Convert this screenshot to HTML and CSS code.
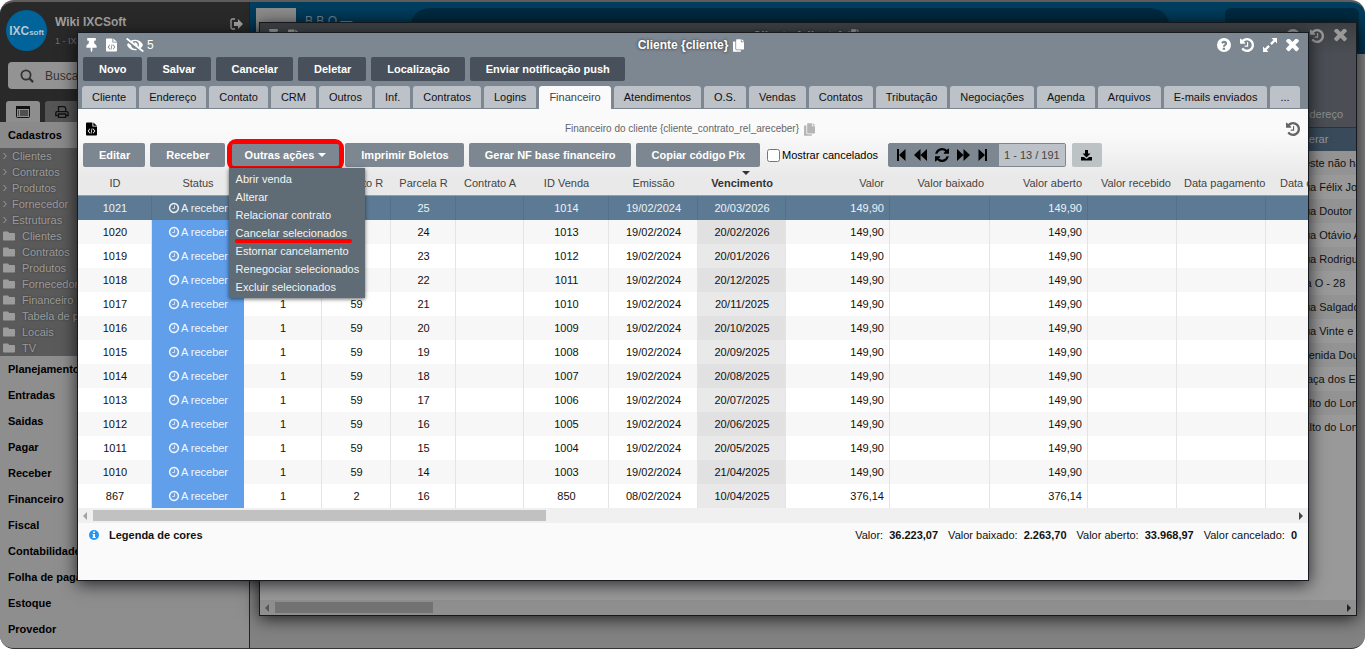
FILE: index.html
```html
<!DOCTYPE html>
<html lang="pt-BR">
<head>
<meta charset="utf-8">
<title>Cliente - Financeiro</title>
<link rel="stylesheet" href="styles.css">
</head>
<body>
<svg class="sprite" aria-hidden="true">
  <symbol id="clock" viewBox="0 0 1792 1792"><path d="M1024 544v448q0 14-9 23t-23 9h-320q-14 0-23-9t-9-23v-64q0-14 9-23t23-9h224v-352q0-14 9-23t23-9h64q14 0 23 9t9 23zm416 352q0-148-73-273t-198-198-273-73-273 73-198 198-73 273 73 273 198 198 273 73 273-73 198-198 73-273zm224 0q0 209-103 385.5t-279.5 279.5-385.5 103-385.5-103-279.5-279.5-103-385.5 103-385.5 279.5-279.5 385.5-103 385.5 103 279.5 279.5 103 385.5z"/></symbol>
  <symbol id="history" viewBox="128 128 1536 1536"><path d="M1664 896q0 156-61 298t-164 245-245 164-298 61q-172 0-327-72.5t-264-204.5q-7-10-6.5-22.5t8.5-20.5l137-138q10-9 25-9 16 2 23 12 73 95 179 147t225 52q104 0 198.5-40.5t163.5-109.5 109.5-163.5 40.5-198.5-40.5-198.5-109.5-163.5-163.5-109.5-198.5-40.5q-98 0-188 35.5t-160 101.5l137 138q31 30 14 69-17 40-59 40h-448q-26 0-45-19t-19-45v-448q0-42 40-59 39-17 69 14l130 129q107-101 244.5-156.5t284.5-55.5q156 0 298 61t245 164 164 245 61 298zm-640-288v448q0 14-9 23t-23 9h-320q-14 0-23-9t-9-23v-64q0-14 9-23t23-9h224v-352q0-14 9-23t23-9h64q14 0 23 9t9 23z"/></symbol>
  <symbol id="times" viewBox="290 420 1210 1210"><path d="M1490 1322q0 40-28 68l-136 136q-28 28-68 28t-68-28l-294-294-294 294q-28 28-68 28t-68-28l-136-136q-28-28-28-68t28-68l294-294-294-294q-28-28-28-68t28-68l136-136q28-28 68-28t68 28l294 294 294-294q28-28 68-28t68 28l136 136q28 28 28 68t-28 68l-294 294 294 294q28 28 28 68z"/></symbol>
  <symbol id="refresh" viewBox="128 128 1536 1536"><path d="M1639 1056q0 5-1 7-64 268-268 434.5t-478 166.5q-146 0-282.5-55t-243.5-157l-129 129q-19 19-45 19t-45-19-19-45v-448q0-26 19-45t45-19h448q26 0 45 19t19 45-19 45l-137 137q71 66 161 102t187 36q134 0 250-65t186-179q11-17 53-117 8-23 30-23h192q13 0 22.5 9.5t9.5 22.5zm25-800v448q0 26-19 45t-45 19h-448q-26 0-45-19t-19-45 19-45l138-138q-148-137-349-137-134 0-250 65t-186 179q-11 17-53 117-8 23-30 23h-199q-13 0-22.5-9.5t-9.5-22.5v-7q65-268 270-434.5t480-166.5q146 0 284 55.5t245 156.5l130-129q19-19 45-19t45 19 19 45z"/></symbol>
  <symbol id="pin" viewBox="0 0 384 512"><path d="M298 214L286 96H328c13 0 24-11 24-24V24c0-13-11-24-24-24H56C43 0 32 11 32 24v48c0 13 11 24 24 24h42L86 214C37 237 0 277 0 328c0 13 11 24 24 24h136v104l25 52c3 6 11 6 14 0l25-52V352h136c13 0 24-11 24-24 0-51-38-91-86-114z"/></symbol>
  <symbol id="eye" viewBox="0 0 640 512"><path d="M320 400c-75.85 0-137.25-58.71-142.9-133.11L72.2 185.82c-13.79 17.3-26.48 35.59-36.72 55.59a32.35 32.35 0 0 0 0 29.19C89.71 376.41 197.07 448 320 448c26.91 0 52.87-4 77.89-10.46L346 397.39a144.13 144.13 0 0 1-26 2.61zm313.82 58.1l-110.55-85.44a331.25 331.25 0 0 0 81.25-102.07 32.35 32.35 0 0 0 0-29.19C550.29 135.59 442.93 64 320 64a308.15 308.15 0 0 0-147.32 37.7L45.46 3.37A16 16 0 0 0 23 6.18L3.37 31.45A16 16 0 0 0 6.18 53.9l588.36 454.73a16 16 0 0 0 22.46-2.81l19.64-25.27a16 16 0 0 0-2.82-22.45zm-183.72-142l-39.3-30.38A94.75 94.75 0 0 0 416 256a94.76 94.76 0 0 0-121.31-92.21A47.65 47.65 0 0 1 304 192a46.64 46.64 0 0 1-1.54 10l-73.61-56.89A142.31 142.31 0 0 1 320 112a143.92 143.92 0 0 1 144 144c0 21.63-5.29 41.79-13.9 60.11z"/></symbol>
  <symbol id="copy" viewBox="0 0 448 512"><path d="M320 448v40c0 13-11 24-24 24H24c-13 0-24-11-24-24V120c0-13 11-24 24-24h72v296c0 31 25 56 56 56h168zm0-344V0H152c-13 0-24 11-24 24v368c0 13 11 24 24 24h272c13 0 24-11 24-24V128H344c-13 0-24-11-24-24zm121-31L375 7A24 24 0 0 0 358 0H352v96h96v-6a24 24 0 0 0-7-17z"/></symbol>
  <symbol id="code" viewBox="0 0 12 14"><path fill-rule="evenodd" d="M1 0h6v4.200h5V13a1 1 0 0 1-1 1H1a1 1 0 0 1-1-1V1a1 1 0 0 1 1-1zM4 6.500 1.800 9.200 4 11.900l.6-.6L3 9.200l1.600-2.100zM8 6.500l-.6.600L9 9.200l-1.600 2.100.6.600 2.200-2.700zM6.300 6.300 5 12l.8.200 1.300-5.700z"/><path d="M8 0v3.400h4z"/></symbol>
  <symbol id="folder" viewBox="0 64 512 384"><path d="M464 128H272l-64-64H48C21.490 64 0 85.490 0 112v288c0 26.510 21.490 48 48 48h416c26.510 0 48-21.490 48-48V176c0-26.510-21.490-48-48-48z"/></symbol>
  <symbol id="help" viewBox="0 0 14 14"><path fill-rule="evenodd" d="M7 0a7 7 0 1 1 0 14A7 7 0 0 1 7 0zM4.200 4.800l1.400 1c.5-.8 2.300-1.200 2.300 0 0 .9-2 1-2 2.900h2c0-1.100 2.200-1.300 2.200-3.200C10.100 2.300 5.800 1.900 4.200 4.800zM5.700 9.700v2.100h2.400V9.700z"/></symbol>
  <symbol id="expand" viewBox="0 0 14 14"><path d="M8.500 0H14v5.500l-1.900-1.900-3.300 3.300-1.700-1.700 3.300-3.300zM5.500 14H0V8.500l1.900 1.900 3.300-3.300 1.700 1.700-3.300 3.300z"/></symbol>
  <symbol id="chev" viewBox="0 0 4 8"><path d="M.5 1 3.300 4 .5 7" fill="none" stroke="currentColor"/></symbol>
</svg>
<div class="desktop">
  <aside class="sidebar">
    <header class="brand">
      <div class="logo"><b>IXC</b><span>soft</span></div>
      <div class="who"><strong>Wiki IXCSoft</strong><small>1 - IXCSoft</small></div>
      <svg class="exit" viewBox="0 0 13 12"><path d="M5 1H2.500Q1 1 1 2.500v7Q1 11 2.500 11H5" fill="none" stroke="currentColor" stroke-width="1.300"/><path d="M4 4h4V1l5 5-5 5V8H4z"/></svg>
    </header>
    <label class="search">
      <svg viewBox="0 0 14 14"><circle cx="6" cy="6" r="4.600" fill="none" stroke="currentColor" stroke-width="1.800"/><path d="m9.500 9.500 3.600 3.600" stroke="currentColor" stroke-width="2.200"/></svg>
      <input type="text" placeholder="Buscar" aria-label="Buscar">
    </label>
    <div class="side-tabs">
      <button class="side-tab on" aria-label="Menu"><svg width="14" height="12" viewBox="0 0 14 12"><rect x=".5" y=".5" width="13" height="11" rx="1" fill="none" stroke="currentColor"/><path d="M0 0h14v3H0zM2 4.500h1v1H2zm0 2h1v1H2zm0 2h1v1H2zM4 4.500h8v1H4zm0 2h8v1H4zm0 2h8v1H4z"/></svg></button>
      <button class="side-tab" aria-label="Imprimir"><svg width="14" height="12" viewBox="0 0 14 12"><path d="M3.500 6V.7h6l1.200 1.200V6M3 9.500H.8V7q0-1.300 1.300-1.300h9.800q1.300 0 1.300 1.300v2.500H11M3.500 8h7.200v3.400H3.500z" fill="none" stroke="currentColor" stroke-width="1.300"/></svg></button>
    </div>
    <h2 class="section">Cadastros</h2>
    <nav class="tree">
      <a href="#"><svg class="chev"><use href="#chev"/></svg>Clientes</a>
      <a href="#"><svg class="chev"><use href="#chev"/></svg>Contratos</a>
      <a href="#"><svg class="chev"><use href="#chev"/></svg>Produtos</a>
      <a href="#"><svg class="chev"><use href="#chev"/></svg>Fornecedor</a>
      <a href="#"><svg class="chev"><use href="#chev"/></svg>Estruturas</a>
      <a href="#"><svg class="fold"><use href="#folder"/></svg>Clientes</a>
      <a href="#"><svg class="fold"><use href="#folder"/></svg>Contratos</a>
      <a href="#"><svg class="fold"><use href="#folder"/></svg>Produtos</a>
      <a href="#"><svg class="fold"><use href="#folder"/></svg>Fornecedor</a>
      <a href="#"><svg class="fold"><use href="#folder"/></svg>Financeiro</a>
      <a href="#"><svg class="fold"><use href="#folder"/></svg>Tabela de preços</a>
      <a href="#"><svg class="fold"><use href="#folder"/></svg>Locais</a>
      <a href="#"><svg class="fold"><use href="#folder"/></svg>TV</a>
    </nav>
    <nav class="sections">
      <a href="#">Planejamento</a><a href="#">Entradas</a><a href="#">Saidas</a><a href="#">Pagar</a><a href="#">Receber</a><a href="#">Financeiro</a><a href="#">Fiscal</a><a href="#">Contabilidade</a><a href="#">Folha de pagamento</a><a href="#">Estoque</a><a href="#">Provedor</a>
    </nav>
  </aside>
  <main class="workspace">
    <header class="topbar"><div class="thumb"></div><span class="company">B B O —</span><div class="pill"></div><div class="panel"></div></header>
  </main>

  <section class="window back">
    <header class="titlebar">
      <div class="tools"><svg class="i-pin"><use href="#pin"/></svg><svg class="i-code"><use href="#code"/></svg></div>
      <h1>Cliente {cliente} <svg class="i-copy"><use href="#copy"/></svg></h1>
      <div class="tools end"><svg class="i14"><use href="#help"/></svg><svg class="i14"><use href="#history"/></svg><svg class="i-x"><use href="#times"/></svg></div>
    </header>
    <table class="addresses">
      <thead><tr><th>Endereço</th></tr></thead>
      <tbody>
        <tr class="sel"><td>Alterar</td></tr>
        <tr><td>Neste não há</td></tr>
        <tr><td>Rua Félix José</td></tr>
        <tr><td>Rua Doutor</td></tr>
        <tr><td>Rua Otávio A</td></tr>
        <tr><td>Rua Rodrigues</td></tr>
        <tr><td>Via O - 28</td></tr>
        <tr><td>Rua Salgado</td></tr>
        <tr><td>Rua Vinte e</td></tr>
        <tr><td>Avenida Doutor</td></tr>
        <tr><td>Praça dos Es</td></tr>
        <tr><td>Salto do Lontra</td></tr>
        <tr><td>Salto do Lontra</td></tr>
      </tbody>
    </table>
    <div class="scroll"><i class="arrow left"></i><i class="bar"></i><i class="arrow right"></i></div>
  </section>

  <section class="window front">
    <header class="titlebar">
      <div class="tools"><svg class="i-pin"><use href="#pin"/></svg><svg class="i-code"><use href="#code"/></svg><svg class="i-eye"><use href="#eye"/></svg><span>5</span></div>
      <h1>Cliente {cliente} <svg class="i-copy"><use href="#copy"/></svg></h1>
      <div class="tools end"><svg class="i14"><use href="#help"/></svg><svg class="i14"><use href="#history"/></svg><svg class="i14"><use href="#expand"/></svg><svg class="i-x"><use href="#times"/></svg></div>
    </header>
    <div class="actions">
      <button>Novo</button><button>Salvar</button><button>Cancelar</button><button>Deletar</button><button>Localização</button><button>Enviar notificação push</button>
    </div>
    <nav class="tabs">
      <button>Cliente</button><button>Endereço</button><button>Contato</button><button>CRM</button><button>Outros</button><button>Inf.</button><button>Contratos</button><button>Logins</button><button class="on">Financeiro</button><button>Atendimentos</button><button>O.S.</button><button>Vendas</button><button>Contatos</button><button>Tributação</button><button>Negociações</button><button>Agenda</button><button>Arquivos</button><button>E-mails enviados</button><button>...</button>
    </nav>
    <div class="content">
      <div class="grid-title">
        <svg class="i-code"><use href="#code"/></svg>
        <h2>Financeiro do cliente {cliente_contrato_rel_areceber} <svg class="i-copy"><use href="#copy"/></svg></h2>
        <svg class="i14"><use href="#history"/></svg>
      </div>
      <div class="toolbar">
        <button>Editar</button>
        <button>Receber</button>
        <div class="dropdown">
          <button class="toggle">Outras ações <i class="caret"></i></button>
          <div class="menu">
            <a href="#">Abrir venda</a><a href="#">Alterar</a><a href="#">Relacionar contrato</a><a href="#" class="marked">Cancelar selecionados</a><a href="#">Estornar cancelamento</a><a href="#">Renegociar selecionados</a><a href="#">Excluir selecionados</a>
          </div>
        </div>
        <button>Imprimir Boletos</button>
        <button>Gerar NF base financeiro</button>
        <button>Copiar código Pix</button>
        <label class="check"><input type="checkbox">Mostrar cancelados</label>
        <div class="pager">
          <button aria-label="Primeira"><svg width="10" height="12" viewBox="0 0 10 12"><path d="M1 0h2v12H1zM9.500 0v12L3 6z"/></svg></button>
          <button aria-label="Anterior"><svg width="13" height="12" viewBox="0 0 13 12"><path d="M6.500 0v12L0 6zM13 0v12L6.500 6z"/></svg></button>
          <button aria-label="Atualizar"><svg width="14" height="14"><use href="#refresh"/></svg></button>
          <button aria-label="Próxima"><svg width="13" height="12" viewBox="0 0 13 12"><path d="M6.500 0v12L13 6zM0 0v12l6.500-6z"/></svg></button>
          <button aria-label="Última"><svg width="10" height="12" viewBox="0 0 10 12"><path d="M7 0h2v12H7zM.5 0v12L7 6z"/></svg></button>
          <span>1 - 13 / 191</span>
        </div>
        <button class="download" aria-label="Baixar"><svg width="11" height="11" viewBox="0 0 11 11"><path d="M4 0h3v3.500h2.500l-4 4-4-4H4zM0 7h3l2.500 2L8 7h3v3.500H0z"/></svg></button>
      </div>
      <div class="table-wrap">
      <table class="grid">
        <colgroup><col class="w74"><col class="w92"><col class="w78"><col class="w69"><col class="w65"><col class="w68"><col class="w85"><col class="w89"><col class="w88"><col class="w104"><col class="w100"><col class="w98"><col class="w89"><col class="w89"><col class="w104"></colgroup>
        <thead><tr><th>ID</th><th>Status</th><th></th><th>Contrato R</th><th>Parcela R</th><th>Contrato A</th><th>ID Venda</th><th>Emissão</th><th class="sorted">Vencimento</th><th class="num">Valor</th><th class="num">Valor baixado</th><th class="num">Valor aberto</th><th class="num">Valor recebido</th><th class="date">Data pagamento</th><th class="start">Data crédito</th></tr></thead>
        <tbody>
        <tr class="sel"><td>1021</td><td class="st"><svg><use href="#clock"/></svg>A receber</td><td></td><td></td><td>25</td><td></td><td>1014</td><td>19/02/2024</td><td>20/03/2026</td><td class="num">149,90</td><td></td><td class="num">149,90</td><td></td><td></td><td></td></tr>
        <tr><td>1020</td><td class="st"><svg><use href="#clock"/></svg>A receber</td><td></td><td></td><td>24</td><td></td><td>1013</td><td>19/02/2024</td><td>20/02/2026</td><td class="num">149,90</td><td></td><td class="num">149,90</td><td></td><td></td><td></td></tr>
        <tr><td>1019</td><td class="st"><svg><use href="#clock"/></svg>A receber</td><td></td><td></td><td>23</td><td></td><td>1012</td><td>19/02/2024</td><td>20/01/2026</td><td class="num">149,90</td><td></td><td class="num">149,90</td><td></td><td></td><td></td></tr>
        <tr><td>1018</td><td class="st"><svg><use href="#clock"/></svg>A receber</td><td></td><td></td><td>22</td><td></td><td>1011</td><td>19/02/2024</td><td>20/12/2025</td><td class="num">149,90</td><td></td><td class="num">149,90</td><td></td><td></td><td></td></tr>
        <tr><td>1017</td><td class="st"><svg><use href="#clock"/></svg>A receber</td><td>1</td><td>59</td><td>21</td><td></td><td>1010</td><td>19/02/2024</td><td>20/11/2025</td><td class="num">149,90</td><td></td><td class="num">149,90</td><td></td><td></td><td></td></tr>
        <tr><td>1016</td><td class="st"><svg><use href="#clock"/></svg>A receber</td><td>1</td><td>59</td><td>20</td><td></td><td>1009</td><td>19/02/2024</td><td>20/10/2025</td><td class="num">149,90</td><td></td><td class="num">149,90</td><td></td><td></td><td></td></tr>
        <tr><td>1015</td><td class="st"><svg><use href="#clock"/></svg>A receber</td><td>1</td><td>59</td><td>19</td><td></td><td>1008</td><td>19/02/2024</td><td>20/09/2025</td><td class="num">149,90</td><td></td><td class="num">149,90</td><td></td><td></td><td></td></tr>
        <tr><td>1014</td><td class="st"><svg><use href="#clock"/></svg>A receber</td><td>1</td><td>59</td><td>18</td><td></td><td>1007</td><td>19/02/2024</td><td>20/08/2025</td><td class="num">149,90</td><td></td><td class="num">149,90</td><td></td><td></td><td></td></tr>
        <tr><td>1013</td><td class="st"><svg><use href="#clock"/></svg>A receber</td><td>1</td><td>59</td><td>17</td><td></td><td>1006</td><td>19/02/2024</td><td>20/07/2025</td><td class="num">149,90</td><td></td><td class="num">149,90</td><td></td><td></td><td></td></tr>
        <tr><td>1012</td><td class="st"><svg><use href="#clock"/></svg>A receber</td><td>1</td><td>59</td><td>16</td><td></td><td>1005</td><td>19/02/2024</td><td>20/06/2025</td><td class="num">149,90</td><td></td><td class="num">149,90</td><td></td><td></td><td></td></tr>
        <tr><td>1011</td><td class="st"><svg><use href="#clock"/></svg>A receber</td><td>1</td><td>59</td><td>15</td><td></td><td>1004</td><td>19/02/2024</td><td>20/05/2025</td><td class="num">149,90</td><td></td><td class="num">149,90</td><td></td><td></td><td></td></tr>
        <tr><td>1010</td><td class="st"><svg><use href="#clock"/></svg>A receber</td><td>1</td><td>59</td><td>14</td><td></td><td>1003</td><td>19/02/2024</td><td>21/04/2025</td><td class="num">149,90</td><td></td><td class="num">149,90</td><td></td><td></td><td></td></tr>
        <tr><td>867</td><td class="st"><svg><use href="#clock"/></svg>A receber</td><td>1</td><td>2</td><td>16</td><td></td><td>850</td><td>08/02/2024</td><td>10/04/2025</td><td class="num">376,14</td><td></td><td class="num">376,14</td><td></td><td></td><td></td></tr>
        </tbody>
      </table>
      </div>
      <div class="scroll"><i class="arrow left"></i><i class="bar"></i><i class="arrow right"></i></div>
      <footer class="totals">
        <svg width="10" height="10" viewBox="0 0 10 10"><circle cx="5" cy="5" r="5" fill="#2196f3"/><path d="M4 1.500h2V3H4zM3.500 4H6v3h.7v1H3.400V7H4V5h-.5z" fill="#fff"/></svg>
        <b class="legend">Legenda de cores</b>
        <span>Valor: <b>36.223,07</b></span><span>Valor baixado: <b>2.263,70</b></span><span>Valor aberto: <b>33.968,97</b></span><span>Valor cancelado: <b>0</b></span>
      </footer>
    </div>
  </section>
</div>
</body>
</html>
```
FILE: styles.css
```css
* { box-sizing: border-box; }
html { background: #fff; }
body { margin: 0; font: 11px/16px "Liberation Sans", Arial, sans-serif; color: #111; }
button, input { font: inherit; margin: 0; }
button { border: 0; padding: 0; cursor: pointer; }
a { color: inherit; text-decoration: none; }
h1, h2 { margin: 0; font-size: inherit; }
svg { fill: currentColor; flex: none; display: block; }
.sprite { position: absolute; width: 0; height: 0; }

.desktop { position: relative; display: flex; height: 100vh; overflow: hidden; border-radius: 14px; border-top: 2px solid #605c5c; border-bottom: 1px solid #333; background: #828282; }

/* Sidebar */
.sidebar { width: 250px; flex: none; display: flex; flex-direction: column; background: #8e8e8e; border-right: 1px solid #0f2a3a; }
.brand { display: flex; align-items: center; gap: 8px; height: 60px; padding: 0 6px; background: #292929; color: #a0a0a0; }
.logo { width: 41px; height: 41px; margin-bottom: 4px; border-radius: 50%; background: #00639a; color: #b9c6ce; display: flex; align-items: baseline; justify-content: center; line-height: 42px; }
.logo b { font-size: 12px; }
.logo span { font-size: 8px; font-weight: bold; }
.who { flex: 1; padding-bottom: 1px; }
.who strong { display: block; font-size: 12px; line-height: 18px; }
.who small { display: block; font-size: 9px; line-height: 20px; color: #707070; }
.exit { width: 13px; height: 12px; margin-bottom: 16px; }
.search { display: flex; align-items: center; background: #292929; padding: 0 8px 12px; }
.search svg { width: 14px; height: 14px; margin: 0 -26px 0 12px; color: #333; z-index: 1; }
.search input { flex: 1; min-width: 0; height: 27px; border: 0; border-radius: 4px; padding: 0 0 0 37px; background: #939393; font-size: 12px; }
.search input::placeholder { color: #333; opacity: 1; }
.side-tabs { display: flex; gap: 5px; height: 21px; padding: 0 6px; background: #292929; }
.side-tab { width: 34px; height: 22px; display: grid; place-items: center; border-radius: 3px 3px 0 0; background: #555; color: #111; }
.side-tab.on { background: #8e8e8e; }
.section { height: 26px; padding-left: 8px; line-height: 26px; color: #000; background: #8a8a8a; }
.tree { display: flex; flex-direction: column; background: #5a5a5a; color: #9c9c9c; }
.tree a { display: flex; align-items: center; height: 16px; text-shadow: 0 0 2px #333; white-space: nowrap; }
.chev { width: 4px; height: 8px; margin: 0 5px 0 3px; }
.fold { width: 12px; height: 10px; margin: 0 7px 0 3px; }
.sections { display: flex; flex-direction: column; }
.sections a { padding-left: 8px; line-height: 26px; font-weight: bold; color: #000; }

/* Workspace header */
.workspace { flex: 1; }
.topbar { display: flex; align-items: flex-start; height: 52px; padding: 6px 6px 0; background: linear-gradient(#003f60, #00304a); overflow: hidden; }
.thumb { width: 40px; height: 40px; background: #8c8c8c; }
.company { width: 114px; padding: 5px 0 0 9px; font-size: 12px; color: #6d8492; }
.pill { flex: 1; height: 46px; border-radius: 20px; background: #002a40; margin-right: 55px; }
.panel { width: 134px; height: 46px; border-radius: 6px; background: #002a40; }

/* Windows */
.window { position: absolute; display: flex; flex-direction: column; overflow: hidden; border: 1px solid #161a1e; box-shadow: 0 3px 16px rgba(0, 0, 0, .75); }
.window.back { left: 259px; right: 8px; top: 20px; bottom: 32px; background: #999; }
.window.front { left: 77px; right: 56px; top: 30px; bottom: 67px; background: #7d8791; }
.titlebar { display: grid; grid-template-columns: 1fr auto 1fr; align-items: center; flex: none; height: 24px; padding: 0 9px 0 8px; color: #fff; }
.back .titlebar { height: 79px; padding-bottom: 54px; background: linear-gradient(#3c3f42, #4b4f55 30px); color: #999; }
.titlebar h1 { display: flex; align-items: center; gap: 5px; padding-right: 3px; font-size: 12px; text-shadow: 0 0 3px #222; }
.tools { display: flex; align-items: center; gap: 9px; font-size: 12px; }
.tools.end { justify-content: flex-end; }
.i-pin { width: 11px; height: 14px; }
.i-code { width: 11px; height: 14px; }
.i-eye { width: 18px; height: 14px; }
.i-eye + span { margin-left: -6px; }
.i-copy { width: 11px; height: 13px; }
.i14 { width: 14px; height: 14px; }
.i-x { width: 13px; height: 13px; }
.front .tools.end { gap: 9px; }
.back .tools.end { gap: 10px; }

.addresses { border-collapse: collapse; table-layout: fixed; width: 100%; }
.addresses th, .addresses td { height: 24px; padding: 0 0 0 1036px; text-align: left; font-weight: normal; white-space: nowrap; overflow: hidden; }
.addresses th { height: 25px; background: #4b4f55; color: #8d8d8d; border-bottom: 1px solid #2b333b; }
.addresses tr:nth-child(odd) td { background: #999; }
.addresses tr:nth-child(even) td { background: #939393; }
.addresses tr.sel td { background: #394b5b; color: #8f9aa3; }

.scroll { display: flex; align-items: center; flex: none; height: 15px; padding: 0 5px; background: #f0f0f0; }
.bar { width: 453px; height: 11px; margin: 0 auto 0 6px; background: #c1c1c1; }
.arrow { border: 4px solid transparent; width: 0; height: 0; }
.arrow.left { border-left: 0; border-right-color: #a3a3a3; }
.arrow.right { border-right: 0; border-left-color: #444; }
.back .scroll { margin-top: auto; background: #8f8f8f; }
.back .bar { width: 158px; background: #737373; }
.back .arrow.left { border-right-color: #555; }
.back .arrow.right { border-left-color: #222; }

.actions { display: flex; gap: 5px; padding: 0 5px; }
.actions button, .toolbar > button, .toggle { height: 24px; padding: 0 15px 0 16px; border-radius: 2px; font-weight: bold; color: #fff; background: #47505b; white-space: nowrap; }
.tabs { display: flex; gap: 3px; padding: 5px 4px 0; }
.tabs button { height: 22px; margin-bottom: 1px; padding: 0 10px; border-radius: 3px 3px 0 0; background: #bdc1c8; color: #111; white-space: nowrap; }
.tabs .on { height: 23px; margin: 0; padding-bottom: 2px; background: #fafafa; color: #444; }

.content { flex: 1; display: flex; flex-direction: column; background: #fafafa linear-gradient(#fafafa 24px, #e9e9e9 68px, #e9e9e9 86px, #fafafa 86px); }
.grid-title { display: flex; align-items: center; justify-content: space-between; padding: 12px 8px 5px; color: #000; }
.grid-title h2 { display: flex; align-items: center; gap: 5px; padding-right: 3px; font-weight: normal; font-size: 10px; color: #666; }
.grid-title h2 .i-copy { color: #b5b5b5; }
.grid-title > .i14 { color: #666; }
.toolbar { display: flex; align-items: center; gap: 5px; padding: 0 5px; }
.toolbar > button, .toggle { background: #7d8791; }
.dropdown { position: relative; z-index: 2; margin: -3px -4px -3px -3px; border: 5px solid #f00; border-radius: 9px; background: #7d8791; }
.toggle { display: flex; align-items: center; gap: 4px; height: 22px; padding: 0 13px; }
.caret { border: 4px solid transparent; border-top-color: #fff; border-bottom: 0; }
.menu { position: absolute; top: 24px; left: -3px; z-index: -1; padding: 2px 6px 2px 7px; background: #5f6b75; color: #f4f4f4; white-space: nowrap; box-shadow: 0 1px 4px rgba(0, 0, 0, .6); }
.menu a { display: block; position: relative; line-height: 18px; }
.marked::after { content: ""; position: absolute; left: -1px; top: 15px; width: 117px; height: 4px; border-radius: 2px; background: #f00; }
.check { display: flex; align-items: center; gap: 2px; margin: 0 5px 0 2px; color: #000; white-space: nowrap; }
.check input { width: 13px; height: 13px; }
.pager { display: flex; align-items: center; height: 24px; background: #7d8791; border: 1px solid #7d8791; border-radius: 2px; gap: 8px; padding-left: 7px; }
.pager button { background: none; color: #000; }
.pager span { margin-left: 3px; padding: 0 5px; line-height: 22px; background: #bdc1c8; color: #444; white-space: nowrap; }
.toolbar .download { width: 30px; margin-left: 1px; padding: 0; display: grid; place-items: center; background: #bdc2c5; color: #000; }

.table-wrap { overflow: hidden; }
.grid { border-collapse: separate; border-spacing: 0; table-layout: fixed; width: 1292px; }
.w65 { width: 65px; } .w68 { width: 68px; } .w69 { width: 69px; } .w74 { width: 74px; } .w78 { width: 78px; } .w85 { width: 85px; } .w88 { width: 88px; } .w89 { width: 89px; } .w92 { width: 92px; } .w98 { width: 98px; } .w100 { width: 100px; } .w104 { width: 104px; }
.grid th { position: relative; height: 28px; padding: 3px 0 0; font-weight: normal; color: #444; white-space: nowrap; border-bottom: 1px solid #9c9c9c; }
.grid td { height: 24px; padding: 0 0 0 1px; text-align: center; border-right: 1px solid #e4e4e4; background: #fff; }
.grid tr:nth-child(even) td { background: #f7f7f7; }
.grid td:nth-child(9) { background: #e9e9e9; }
.grid tr:nth-child(even) td:nth-child(9) { background: #e1e1e1; }
.grid .num { text-align: right; padding-right: 6px; }
.grid td.num { padding-right: 5px; }
.grid .date { text-align: left; padding-left: 7px; }
.grid .start { text-align: left; padding-left: 14px; }
.grid .sorted { font-weight: bold; color: #333; }
.sorted::before { content: ""; position: absolute; left: 50%; top: 3px; border: 4px solid transparent; border-top-color: #333; border-bottom: 0; }
.grid tr td.st { color: #f1f6fd; background: #619fea; border-color: #619fea; }
.st svg { display: inline-block; width: 12px; height: 12px; vertical-align: -2px; margin-right: 1px; }
.grid tr.sel td { background: #5d7a94; color: #eef2f5; border-color: #54708a; }
.totals { display: flex; align-items: center; gap: 10px; padding: 4px 11px; }
.legend { margin-right: auto; }
.totals span b { margin-left: 3px; }
```
